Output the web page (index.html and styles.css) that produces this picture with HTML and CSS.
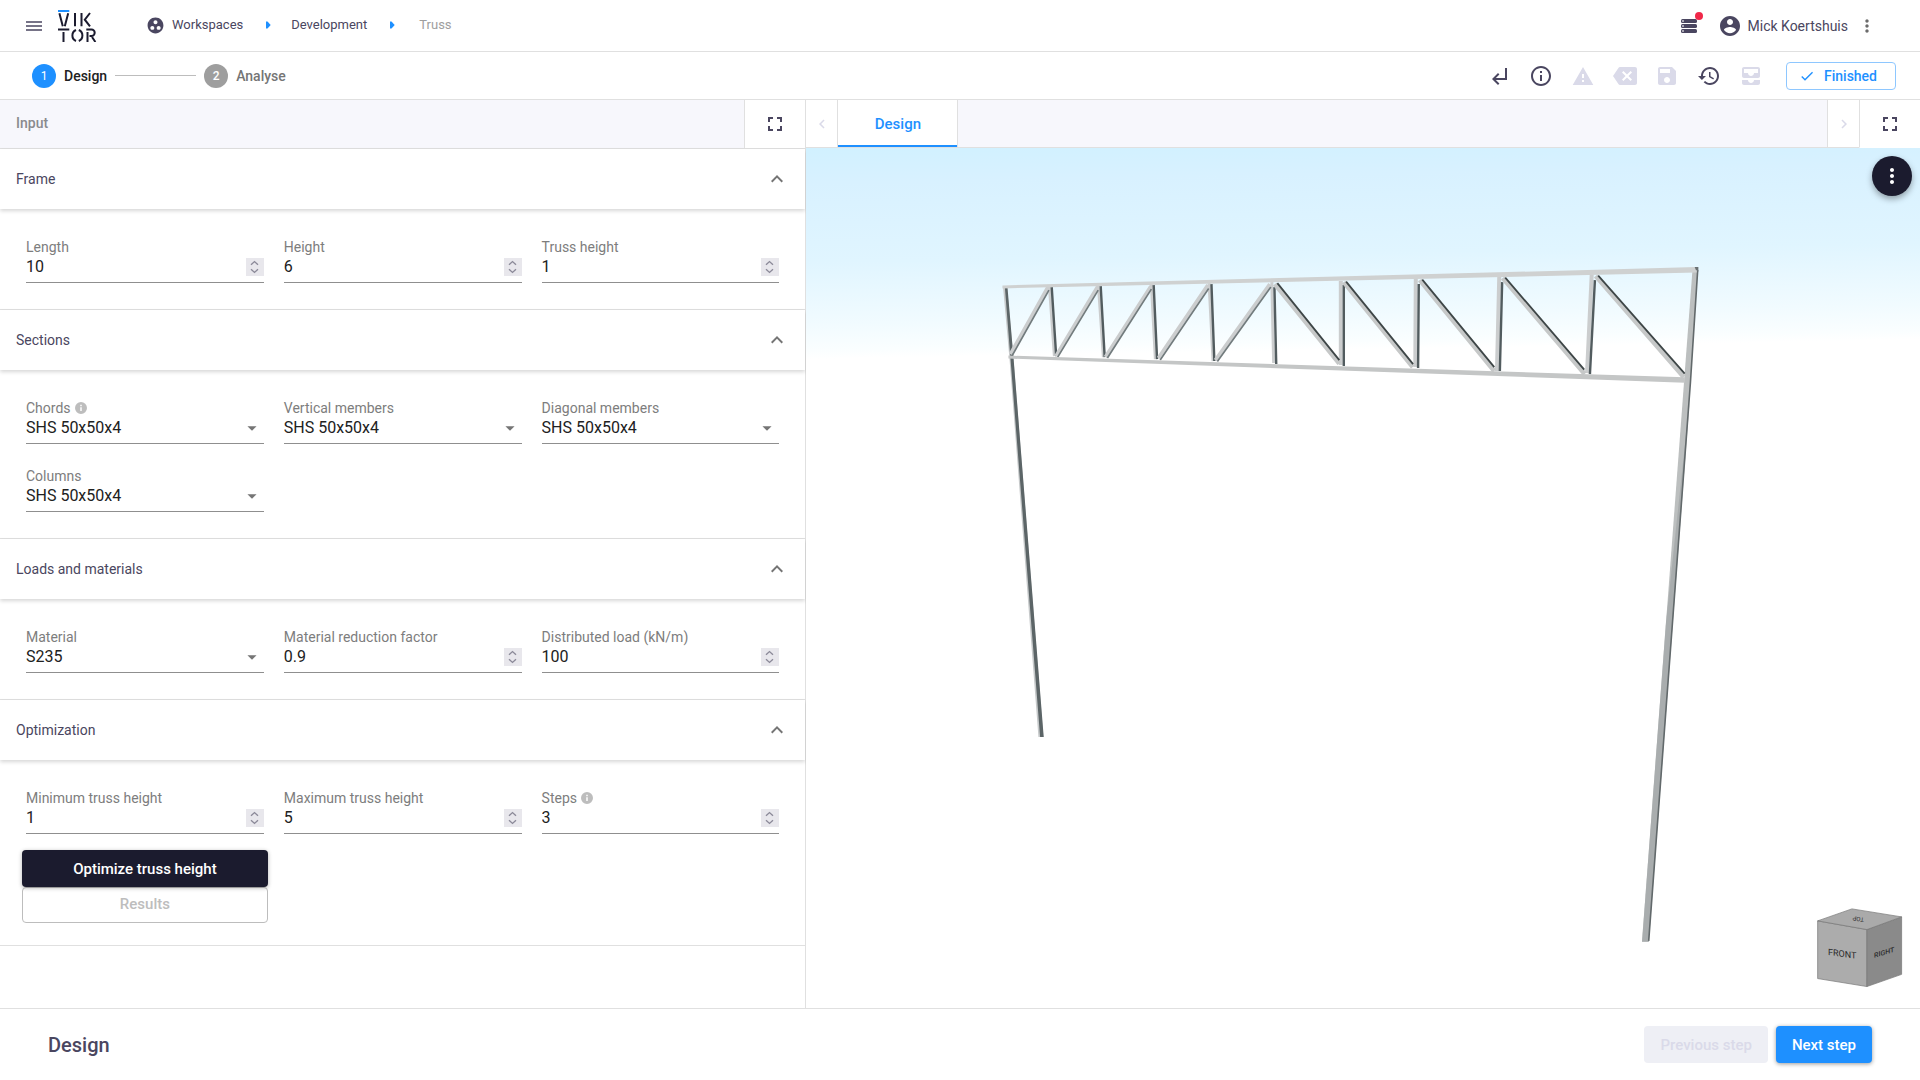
FILE: index.html
```html
<!DOCTYPE html>
<html lang="en">
<head>
<meta charset="utf-8">
<meta name="viewport" content="width=device-width, initial-scale=1">
<title>Truss - VIKTOR</title>
<link rel="stylesheet" href="styles.css">
</head>
<body>
<svg class="sprite" aria-hidden="true">
  <symbol id="menu" viewBox="0 0 16 10"><path d="M0 1h16M0 5h16M0 9h16" stroke="currentColor" stroke-width="1.4"/></symbol>
  <symbol id="group-work" viewBox="0 0 24 24"><path d="M12 2C6.480 2 2 6.480 2 12s4.480 10 10 10 10-4.480 10-10S17.520 2 12 2zM8 17.500c-1.380 0-2.500-1.120-2.500-2.500s1.120-2.500 2.500-2.500 2.500 1.120 2.500 2.500-1.120 2.500-2.500 2.500zM9.500 8c0-1.380 1.120-2.500 2.500-2.500s2.500 1.120 2.500 2.500-1.120 2.500-2.500 2.500S9.500 9.380 9.500 8zm6.500 9.500c-1.380 0-2.500-1.120-2.500-2.500s1.120-2.500 2.500-2.500 2.500 1.120 2.500 2.500-1.120 2.500-2.500 2.500z"/></symbol>
  <symbol id="crumb-arrow" viewBox="0 0 5 8"><path d="M0 .5h1.500L4.700 4 1.500 7.500H0z"/></symbol>
  <symbol id="queue" viewBox="0 0 16 14"><rect width="16" height="4" rx="1.500"/><rect y="5" width="16" height="4" rx="1.500"/><rect y="10" width="16" height="4" rx="1.500"/><path d="M1.300 2h1.400M1.300 7h1.400M1.300 12h1.400" stroke="#fff" stroke-width="1.400"/></symbol>
  <symbol id="account" viewBox="0 0 24 24"><path d="M12 2C6.480 2 2 6.480 2 12s4.480 10 10 10 10-4.480 10-10S17.520 2 12 2zm0 3c1.660 0 3 1.340 3 3s-1.340 3-3 3-3-1.340-3-3 1.340-3 3-3zm0 14.200c-2.500 0-4.710-1.280-6-3.220.03-1.990 4-3.080 6-3.080 1.990 0 5.970 1.090 6 3.080-1.290 1.940-3.500 3.220-6 3.220z"/></symbol>
  <symbol id="more" viewBox="0 0 24 24"><path d="M12 8c1.100 0 2-.9 2-2s-.9-2-2-2-2 .9-2 2 .9 2 2 2zm0 2c-1.100 0-2 .9-2 2s.9 2 2 2 2-.9 2-2-.9-2-2-2zm0 6c-1.100 0-2 .9-2 2s.9 2 2 2 2-.9 2-2-.9-2-2-2z"/></symbol>
  <symbol id="return" viewBox="0 0 24 24"><path d="M11 9l1.420 1.420L8.830 14H18V4h2v12H8.830l3.590 3.580L11 21l-6-6 6-6z"/></symbol>
  <symbol id="info-outline" viewBox="0 0 24 24"><path d="M11 7h2v2h-2zm0 4h2v6h-2zm1-9C6.480 2 2 6.480 2 12s4.480 10 10 10 10-4.480 10-10S17.520 2 12 2zm0 18c-4.410 0-8-3.590-8-8s3.590-8 8-8 8 3.590 8 8-3.590 8-8 8z"/></symbol>
  <symbol id="info" viewBox="0 0 24 24"><path d="M12 0a12 12 0 1 0 0 24 12 12 0 0 0 0-24zm1.500 18h-3v-7.500h3zm0-9.500h-3v-3h3z"/></symbol>
  <symbol id="warning" viewBox="0 0 24 24"><path d="M1.700 21h20.600L12 3 1.700 21zM13 18h-2v-2h2v2zm0-4h-2v-4h2v4z"/></symbol>
  <symbol id="backspace" viewBox="0 0 24 24"><path d="M22 3H7c-.69 0-1.230.35-1.590.88L0 12l5.410 8.110c.36.53.9.89 1.590.89h15c1.100 0 2-.9 2-2V5c0-1.100-.9-2-2-2zm-3 12.590L17.590 17 14 13.410 10.410 17 9 15.590 12.590 12 9 8.410 10.410 7 14 10.590 17.590 7 19 8.410 15.410 12 19 15.590z"/></symbol>
  <symbol id="save" viewBox="0 0 24 24"><path d="M17 3H5c-1.110 0-2 .9-2 2v14c0 1.100.89 2 2 2h14c1.100 0 2-.9 2-2V7l-4-4zm-5 16c-1.660 0-3-1.340-3-3s1.340-3 3-3 3 1.340 3 3-1.340 3-3 3zm3-10H5V5h10v4z"/></symbol>
  <symbol id="history" viewBox="0 0 24 24"><path d="M13 3c-4.970 0-9 4.030-9 9H1l3.890 3.890.07.14L9 12H6c0-3.870 3.130-7 7-7s7 3.130 7 7-3.130 7-7 7c-1.930 0-3.680-.79-4.940-2.060l-1.420 1.420C8.270 19.990 10.510 21 13 21c4.970 0 9-4.030 9-9s-4.030-9-9-9zm-1 5v5l4.280 2.540.72-1.210-3.500-2.080V8H12z"/></symbol>
  <symbol id="inbox" viewBox="0 0 24 24"><path d="M19 3H5c-1.100 0-2 .9-2 2v7c0 1.100.9 2 2 2h14c1.100 0 2-.9 2-2V5c0-1.100-.9-2-2-2zm0 6h-4c0 1.620-1.380 3-3 3s-3-1.380-3-3H5V5h14v4zm-4 7h6v3c0 1.100-.9 2-2 2H5c-1.100 0-2-.9-2-2v-3h6c0 1.660 1.340 3 3 3s3-1.340 3-3z"/></symbol>
  <symbol id="check" viewBox="0 0 24 24"><path d="M9 16.170L4.830 12l-1.420 1.410L9 19 21 7l-1.410-1.410z"/></symbol>
  <symbol id="fullscreen" viewBox="0 0 24 24"><path d="M7 14H5v5h5v-2H7v-3zm-2-4h2V7h3V5H5v5zm12 7h-3v2h5v-5h-2v3zM14 5v2h3v3h2V5h-5z"/></symbol>
  <symbol id="left" viewBox="0 0 24 24"><path d="M15.410 7.410L14 6l-6 6 6 6 1.410-1.410L10.830 12z"/></symbol>
  <symbol id="right" viewBox="0 0 24 24"><path d="M10 6L8.590 7.410 13.170 12l-4.580 4.590L10 18l6-6z"/></symbol>
  <symbol id="up" viewBox="0 0 24 24"><path d="M12 8l-6 6 1.410 1.410L12 10.830l4.590 4.580L18 14z"/></symbol>
  <symbol id="drop" viewBox="0 0 24 24"><path d="M7 10l5 5 5-5z"/></symbol>
  <symbol id="spin" viewBox="0 0 18 18"><path d="M0 0h18v18H0z" fill="#e8e7ec"/><path d="M5 6.800L8.500 3.600 12 6.800M5 11.200l3.500 3.200 3.500-3.200" fill="none" stroke="#8c8a99" stroke-width="1.400"/></symbol>
</svg>

<header class="topbar">
  <button class="icon-btn menu-btn" aria-label="Menu"><svg><use href="#menu"/></svg></button>
  <a class="logo" href="#" aria-label="VIKTOR">
    <svg viewBox="58 10 39 32" fill="none" stroke="#1b1b2f" stroke-width="2">
      <path d="M58 11h11.300" stroke="#1e90ff"/>
      <path d="M59.400 13.200l3.400 13M68.200 13.200l-3.400 13M75 13v13.300M81.500 13v13.300M90 13l-5.200 6.700 5.200 6.600"/>
      <path d="M58 29.600h11.300M63.500 32v10M76 30a6 6 0 0 0 0 11M78.800 30a6 6 0 0 1 0 11M87.500 32v10M86.300 29.600h5.200a3 3 0 0 1 0 6.400h-2M92 37l3.400 5"/>
    </svg>
  </a>
  <nav class="crumbs" aria-label="Breadcrumb">
    <a class="crumb" href="#"><svg class="crumb-icon"><use href="#group-work"/></svg>Workspaces</a>
    <svg class="crumb-arrow"><use href="#crumb-arrow"/></svg>
    <a class="crumb" href="#">Development</a>
    <svg class="crumb-arrow"><use href="#crumb-arrow"/></svg>
    <span class="crumb crumb-current">Truss</span>
  </nav>
  <div class="account">
    <button class="icon-btn queue-btn" aria-label="Jobs"><svg><use href="#queue"/></svg><span class="badge"></span></button>
    <svg class="icon"><use href="#account"/></svg>
    <span class="user-name">Mick Koertshuis</span>
    <button class="icon-btn more-btn" aria-label="Account menu"><svg><use href="#more"/></svg></button>
  </div>
</header>

<div class="stepbar">
  <ol class="steps">
    <li class="step step-active"><span class="step-no">1</span>Design</li>
    <li class="step"><span class="step-no">2</span>Analyse</li>
  </ol>
  <div class="tools">
    <button class="icon-btn" aria-label="Return"><svg><use href="#return"/></svg></button>
    <button class="icon-btn" aria-label="Info"><svg><use href="#info-outline"/></svg></button>
    <button class="icon-btn" aria-label="Warnings" disabled><svg><use href="#warning"/></svg></button>
    <button class="icon-btn" aria-label="Clear" disabled><svg><use href="#backspace"/></svg></button>
    <button class="icon-btn" aria-label="Save" disabled><svg><use href="#save"/></svg></button>
    <button class="icon-btn" aria-label="History"><svg><use href="#history"/></svg></button>
    <button class="icon-btn" aria-label="Store" disabled><svg><use href="#inbox"/></svg></button>
  </div>
  <button class="status-btn"><svg><use href="#check"/></svg>Finished</button>
</div>

<main class="workspace">
  <form class="panel">
    <div class="panel-head">
      <h1 class="panel-title">Input</h1>
      <button type="button" class="icon-btn expand-btn" aria-label="Expand input"><svg><use href="#fullscreen"/></svg></button>
    </div>

    <section class="group">
      <button type="button" class="group-head">Frame<svg class="icon"><use href="#up"/></svg></button>
      <div class="fields">
        <div class="field"><label for="length">Length</label><div class="control"><input id="length" type="number" value="10"><svg class="spin"><use href="#spin"/></svg></div></div>
        <div class="field"><label for="height">Height</label><div class="control"><input id="height" type="number" value="6"><svg class="spin"><use href="#spin"/></svg></div></div>
        <div class="field"><label for="truss-height">Truss height</label><div class="control"><input id="truss-height" type="number" value="1"><svg class="spin"><use href="#spin"/></svg></div></div>
      </div>
    </section>

    <section class="group">
      <button type="button" class="group-head">Sections<svg class="icon"><use href="#up"/></svg></button>
      <div class="fields">
        <div class="field"><label for="chords">Chords<svg class="hint"><use href="#info"/></svg></label><div class="control"><select id="chords"><option>SHS 50x50x4</option></select><svg class="icon"><use href="#drop"/></svg></div></div>
        <div class="field"><label for="verticals">Vertical members</label><div class="control"><select id="verticals"><option>SHS 50x50x4</option></select><svg class="icon"><use href="#drop"/></svg></div></div>
        <div class="field"><label for="diagonals">Diagonal members</label><div class="control"><select id="diagonals"><option>SHS 50x50x4</option></select><svg class="icon"><use href="#drop"/></svg></div></div>
        <div class="field"><label for="columns">Columns</label><div class="control"><select id="columns"><option>SHS 50x50x4</option></select><svg class="icon"><use href="#drop"/></svg></div></div>
      </div>
    </section>

    <section class="group">
      <button type="button" class="group-head">Loads and materials<svg class="icon"><use href="#up"/></svg></button>
      <div class="fields">
        <div class="field"><label for="material">Material</label><div class="control"><select id="material"><option>S235</option></select><svg class="icon"><use href="#drop"/></svg></div></div>
        <div class="field"><label for="reduction">Material reduction factor</label><div class="control"><input id="reduction" type="number" step="0.1" value="0.9"><svg class="spin"><use href="#spin"/></svg></div></div>
        <div class="field"><label for="load">Distributed load (kN/m)</label><div class="control"><input id="load" type="number" value="100"><svg class="spin"><use href="#spin"/></svg></div></div>
      </div>
    </section>

    <section class="group group-last">
      <button type="button" class="group-head">Optimization<svg class="icon"><use href="#up"/></svg></button>
      <div class="fields">
        <div class="field"><label for="min-height">Minimum truss height</label><div class="control"><input id="min-height" type="number" value="1"><svg class="spin"><use href="#spin"/></svg></div></div>
        <div class="field"><label for="max-height">Maximum truss height</label><div class="control"><input id="max-height" type="number" value="5"><svg class="spin"><use href="#spin"/></svg></div></div>
        <div class="field"><label for="steps">Steps<svg class="hint"><use href="#info"/></svg></label><div class="control"><input id="steps" type="number" value="3"><svg class="spin"><use href="#spin"/></svg></div></div>
        <div class="actions">
          <button type="button" class="btn btn-dark">Optimize truss height</button>
          <button type="button" class="btn btn-outline" disabled>Results</button>
        </div>
      </div>
    </section>
  </form>

  <section class="viewer">
    <div class="tabs">
      <button class="icon-btn scroll-btn" aria-label="Previous tabs" disabled><svg><use href="#left"/></svg></button>
      <button class="tab">Design</button>
      <div class="tabs-space"></div>
      <button class="icon-btn scroll-btn scroll-next" aria-label="Next tabs" disabled><svg><use href="#right"/></svg></button>
      <button class="icon-btn expand-btn" aria-label="Expand view"><svg><use href="#fullscreen"/></svg></button>
    </div>
    <div class="scene">
      <svg class="model" viewBox="806 148 1114 860" role="img" aria-label="Truss model">
        <!-- columns -->
        <path fill="#c6c9ca" d="M1003 286l4 0 6.500 72 30 379h-5l-29-379z"/>
        <path fill="#5c6567" d="M1005 288l2.600 0 6 70 30.200 379h-3.600l-29.700-379z"/>
        <path fill="#bcbfbf" d="M1692.700 271h5.500l-7.500 112-41.500 559h-6.900l42.200-562z"/>
        <path fill="#a3a7a8" opacity=".75" d="M1690 400l-41 542h-6.700l24-320z"/>
        <path fill="none" stroke="#62696b" stroke-width="1.600" d="M1698 270l-7.300 113-41.700 558"/>
        <!-- verticals: lit face, then shaded face -->
        <g fill="none" stroke="#cbcdce" stroke-width="3">
          <path d="M1049.500 286l5 70M1098.500 285l5 72M1151.500 284l4 75M1209.200 283l4 78M1272 282l1.800 81"/>
          <path stroke-width="4" d="M1341 281v84M1416 278l-.5 89M1499.500 276l-2.300 95M1592 274l-4.700 99"/>
        </g>
        <path fill="none" stroke="#525c5f" stroke-width="2.400" d="M1051.800 287l4.500 69M1100.800 286l4 71M1153.800 285l3.400 74M1211.600 284l2.900 77M1274.600 287l1.800 77M1344 285v81M1419 284l-.7 84M1502.400 282l-2.300 89M1595.200 280l-5 94"/>
        <!-- diagonals left of midspan -->
        <path fill="none" stroke="#cbcdce" stroke-width="3.600" d="M1010.500 354l38-68M1056 356l42-70M1105.500 357l45.500-71M1158.500 358l49.500-73M1215.500 360l54.500-76"/>
        <path fill="none" stroke="#727b7d" stroke-width="1.700" d="M1012.500 355l36.500-65M1057.800 357l40.500-67M1107.500 358l44-69M1160.300 360l48.500-71.500M1217.500 361.500l53.500-74.500"/>
        <!-- diagonals right of midspan -->
        <path fill="none" stroke="#c6c8c8" stroke-width="4.600" d="M1275 284l64.500 79.500M1344 282l69 85M1420 280l74.500 91M1503 278l82 96M1596 276l88 101"/>
        <path fill="none" stroke="#3e4647" stroke-width="1.800" d="M1277.500 283l62 77M1346.300 281.500l67 82.500M1422.500 279.500l72 87.500M1505.500 277.500l79 92M1598.500 275.500l86.500 98"/>
        <!-- chords -->
        <path fill="#cfd1d1" d="M1002.500 285.300L1697 267v5.500L1002.500 288.300z"/>
        <path fill="#c4c6c6" d="M1008.500 355.500L1685 377.300v5.400L1008.500 358.500z"/>
        <path fill="#6a7072" d="M1695 266.800h3.700v4.700l-2.500-1.500z"/>
        <!-- orientation cube -->
        <g stroke="#777" stroke-width=".7">
          <path fill="#acacac" d="M1818 921l49.300 8.700v57l-49.300-8z"/>
          <path fill="#8a8a8a" d="M1867.300 929.700l34.700-12.700v57.500l-34.700 12.200z"/>
          <path fill="#aaa" d="M1818 921l34.300-12 49.700 8-34.700 12.700z"/>
        </g>
        <text class="cube-text" transform="translate(1842.500 957) skewY(8)">FRONT</text>
        <text class="cube-text cube-side" transform="translate(1884.500 955) skewY(-17)">RIGHT</text>
        <text class="cube-text cube-top" transform="translate(1859 917) rotate(188)">TOP</text>
      </svg>
      <button class="fab" aria-label="View options"><svg><use href="#more"/></svg></button>
    </div>
  </section>
</main>

<footer class="footer">
  <h2 class="footer-title">Design</h2>
  <button class="btn btn-muted" disabled>Previous step</button>
  <button class="btn btn-primary">Next step</button>
</footer>
</body>
</html>
```
FILE: styles.css
```css
:root {
  --ink: #4a4660;
  --text: #212121;
  --grey: #757575;
  --line: #e0e0e0;
  --blue: #1e90ff;
  --dark: #1b1b2e;
  --tint: #f7f7fc;
  --faded: #dadae9;
}

* { box-sizing: border-box; }

body {
  margin: 0;
  min-height: 100vh;
  display: flex;
  flex-direction: column;
  font: 14px/20px Roboto, "Liberation Sans", sans-serif;
  color: var(--ink);
  background: #fff;
}

button, input, select { font: inherit; color: inherit; }
button { border: 0; padding: 0; background: none; cursor: pointer; }
h1, h2, ol { margin: 0; padding: 0; font: inherit; }
a { color: inherit; text-decoration: none; }
svg { display: block; fill: currentColor; flex: none; }

.sprite { display: none; }
.icon { width: 24px; height: 24px; }

.icon-btn { display: flex; align-items: center; justify-content: center; }
.icon-btn svg { width: 24px; height: 24px; }
.icon-btn:disabled { color: var(--faded); }

/* top bar */
.topbar {
  display: flex;
  align-items: center;
  height: 52px;
  padding: 0 43px 0 26px;
  border-bottom: 1px solid var(--line);
}
.menu-btn svg { width: 16px; height: 10px; }
.logo { margin-left: 16px; }
.logo svg { width: 39px; height: 32px; fill: none; }
.crumbs {
  display: flex;
  align-items: center;
  gap: 20px;
  margin-left: 49px;
  padding-bottom: 1px;
  font-size: 13px;
}
.crumb { display: flex; align-items: center; gap: 7px; margin-right: 3px; }
.crumb-current { color: #9e9e9e; margin-left: 4px; }
.crumb-icon { width: 19px; height: 19px; }
.crumb-arrow { width: 5px; height: 8px; color: var(--blue); }
.account { display: flex; align-items: center; margin-left: auto; }
.queue-btn { position: relative; margin-right: 21px; }
.queue-btn svg { width: 16px; height: 14px; }
.badge {
  position: absolute;
  top: -7px;
  right: -6px;
  width: 8px;
  height: 8px;
  border-radius: 50%;
  background: #f02849;
}
.user-name { margin: 0 9px 0 6px; }
.more-btn { color: #6b6b6b; }
.more-btn svg { width: 20px; height: 20px; }

/* step bar */
.stepbar {
  display: flex;
  align-items: center;
  height: 48px;
  padding: 0 24px 0 32px;
  border-bottom: 1px solid var(--line);
}
.steps { display: flex; list-style: none; font-weight: 500; }
.step { display: flex; align-items: center; gap: 8px; color: var(--grey); }
.step-active { color: var(--text); }
.step-active::after {
  content: "";
  width: 81px;
  margin-right: 8px;
  border-top: 1px solid #bdbdbd;
}
.step-no {
  width: 24px;
  height: 24px;
  border-radius: 50%;
  background: #9e9e9e;
  color: #fff;
  font-size: 12px;
  line-height: 24px;
  text-align: center;
}
.step-active .step-no { background: var(--blue); font-weight: 400; }
.tools { display: flex; gap: 18px; margin: 0 23px 0 auto; }
.status-btn {
  display: flex;
  align-items: center;
  gap: 9px;
  height: 28px;
  padding: 0 18px 0 12px;
  border: 1px solid #8ec7ff;
  border-radius: 4px;
  color: var(--blue);
  font-weight: 500;
}
.status-btn svg { width: 16px; height: 16px; }

/* workspace */
.workspace { flex: 1; display: flex; }

.panel { width: 42%; border-right: 1px solid var(--line); }
.panel-head {
  display: flex;
  height: 49px;
  border-bottom: 1px solid var(--line);
  background: var(--tint);
}
.panel-title { flex: 1; padding: 14px 16px; color: #8a8a8e; font-weight: 500; line-height: 18px; }
.expand-btn {
  width: 61px;
  border-left: 1px solid var(--line);
  background: #fff;
}

.group + .group { border-top: 1px solid var(--line); }
.group-last { border-bottom: 1px solid var(--line); }
.group-head {
  display: flex;
  align-items: center;
  justify-content: space-between;
  width: 100%;
  height: 60px;
  padding: 0 16px;
  box-shadow: 0 2px 4px rgba(0, 0, 0, .16);
}
.group-head .icon { color: var(--grey); }

.fields {
  display: grid;
  grid-template-columns: repeat(3, 1fr);
  gap: 23px 12px;
  padding: 29px 22px 26px;
}
.group-last .fields { row-gap: 16px; padding-bottom: 22px; }
.field { padding: 0 4px; }
.field label {
  display: flex;
  align-items: center;
  gap: 4px;
  line-height: 18px;
  color: #7d7d7d;
}
.hint { width: 12px; height: 12px; color: #bdbdbd; }
.control {
  display: grid;
  align-items: center;
  border-bottom: 1px solid #8f8f8f;
  padding-bottom: 4px;
}
.control > * { grid-area: 1 / 1; }
.control input, .control select {
  width: 100%;
  height: 22px;
  padding: 0;
  border: 0;
  outline: 0;
  background: none;
  color: var(--text);
  font-size: 16px;
  line-height: 22px;
  appearance: none;
}
.control input::-webkit-inner-spin-button { appearance: none; margin: 0; }
.control svg { justify-self: end; pointer-events: none; }
.control .icon { height: 22px; color: var(--grey); }
.spin { width: 18px; height: 18px; }

.actions { display: flex; flex-direction: column; }
.btn { height: 37px; border-radius: 4px; font-size: 15px; font-weight: 500; }
.btn-dark {
  position: relative;
  background: var(--dark);
  color: #fff;
  box-shadow: 0 1px 4px rgba(0, 0, 0, .3);
}
.btn-outline { height: 36px; padding-bottom: 2px; border: 1px solid #bdbdbd; color: #bdbdbd; }

/* viewer */
.viewer { flex: 1; display: flex; flex-direction: column; }
.tabs { display: flex; height: 48px; }
.tabs > * { border-bottom: 1px solid var(--line); }
.tabs .expand-btn { border-bottom-color: #fff; }
.scroll-btn { width: 32px; border-right: 1px solid var(--line); }
.scroll-btn svg { width: 18px; height: 18px; }
.scroll-next { border-left: 1px solid var(--line); border-right: 0; }
.tab {
  width: 120px;
  border-right: 1px solid var(--line);
  box-shadow: inset 0 -2px var(--blue);
  color: var(--blue);
  font-size: 15px;
  font-weight: 500;
}
.tabs-space { flex: 1; background: var(--tint); }

.scene {
  position: relative;
  flex: 1;
  display: flex;
  background: linear-gradient(179deg, #d1f1ff 0%, #d8f1ff 4%, #e0f5ff 13%, #f1fbff 20%, #fafeff 23%, #fff 24%);
}
.model { flex: 1; width: 100%; height: 100%; }
.cube-text { font-size: 9px; fill: #2a2a2a; text-anchor: middle; }
.cube-side { font-size: 7px; font-weight: 500; }
.cube-top { font-size: 6px; }
.fab {
  position: absolute;
  top: 8px;
  right: 8px;
  display: grid;
  place-items: center;
  width: 40px;
  height: 40px;
  border-radius: 50%;
  background: var(--dark);
  color: #fff;
  box-shadow: 0 3px 6px rgba(0, 0, 0, .35);
}
.fab svg { width: 24px; height: 24px; }

/* footer */
.footer {
  display: flex;
  align-items: center;
  gap: 8px;
  height: 72px;
  padding: 0 48px;
  border-top: 1px solid var(--line);
}
.footer-title { margin-right: auto; font-size: 20px; font-weight: 500; line-height: 24px; }
.btn-muted { padding: 0 16px; background: #eeeff5; color: var(--faded); }
.btn-primary {
  padding: 0 16px;
  background: var(--blue);
  color: #fff;
  box-shadow: 0 1px 4px rgba(0, 0, 0, .4);
}
```
